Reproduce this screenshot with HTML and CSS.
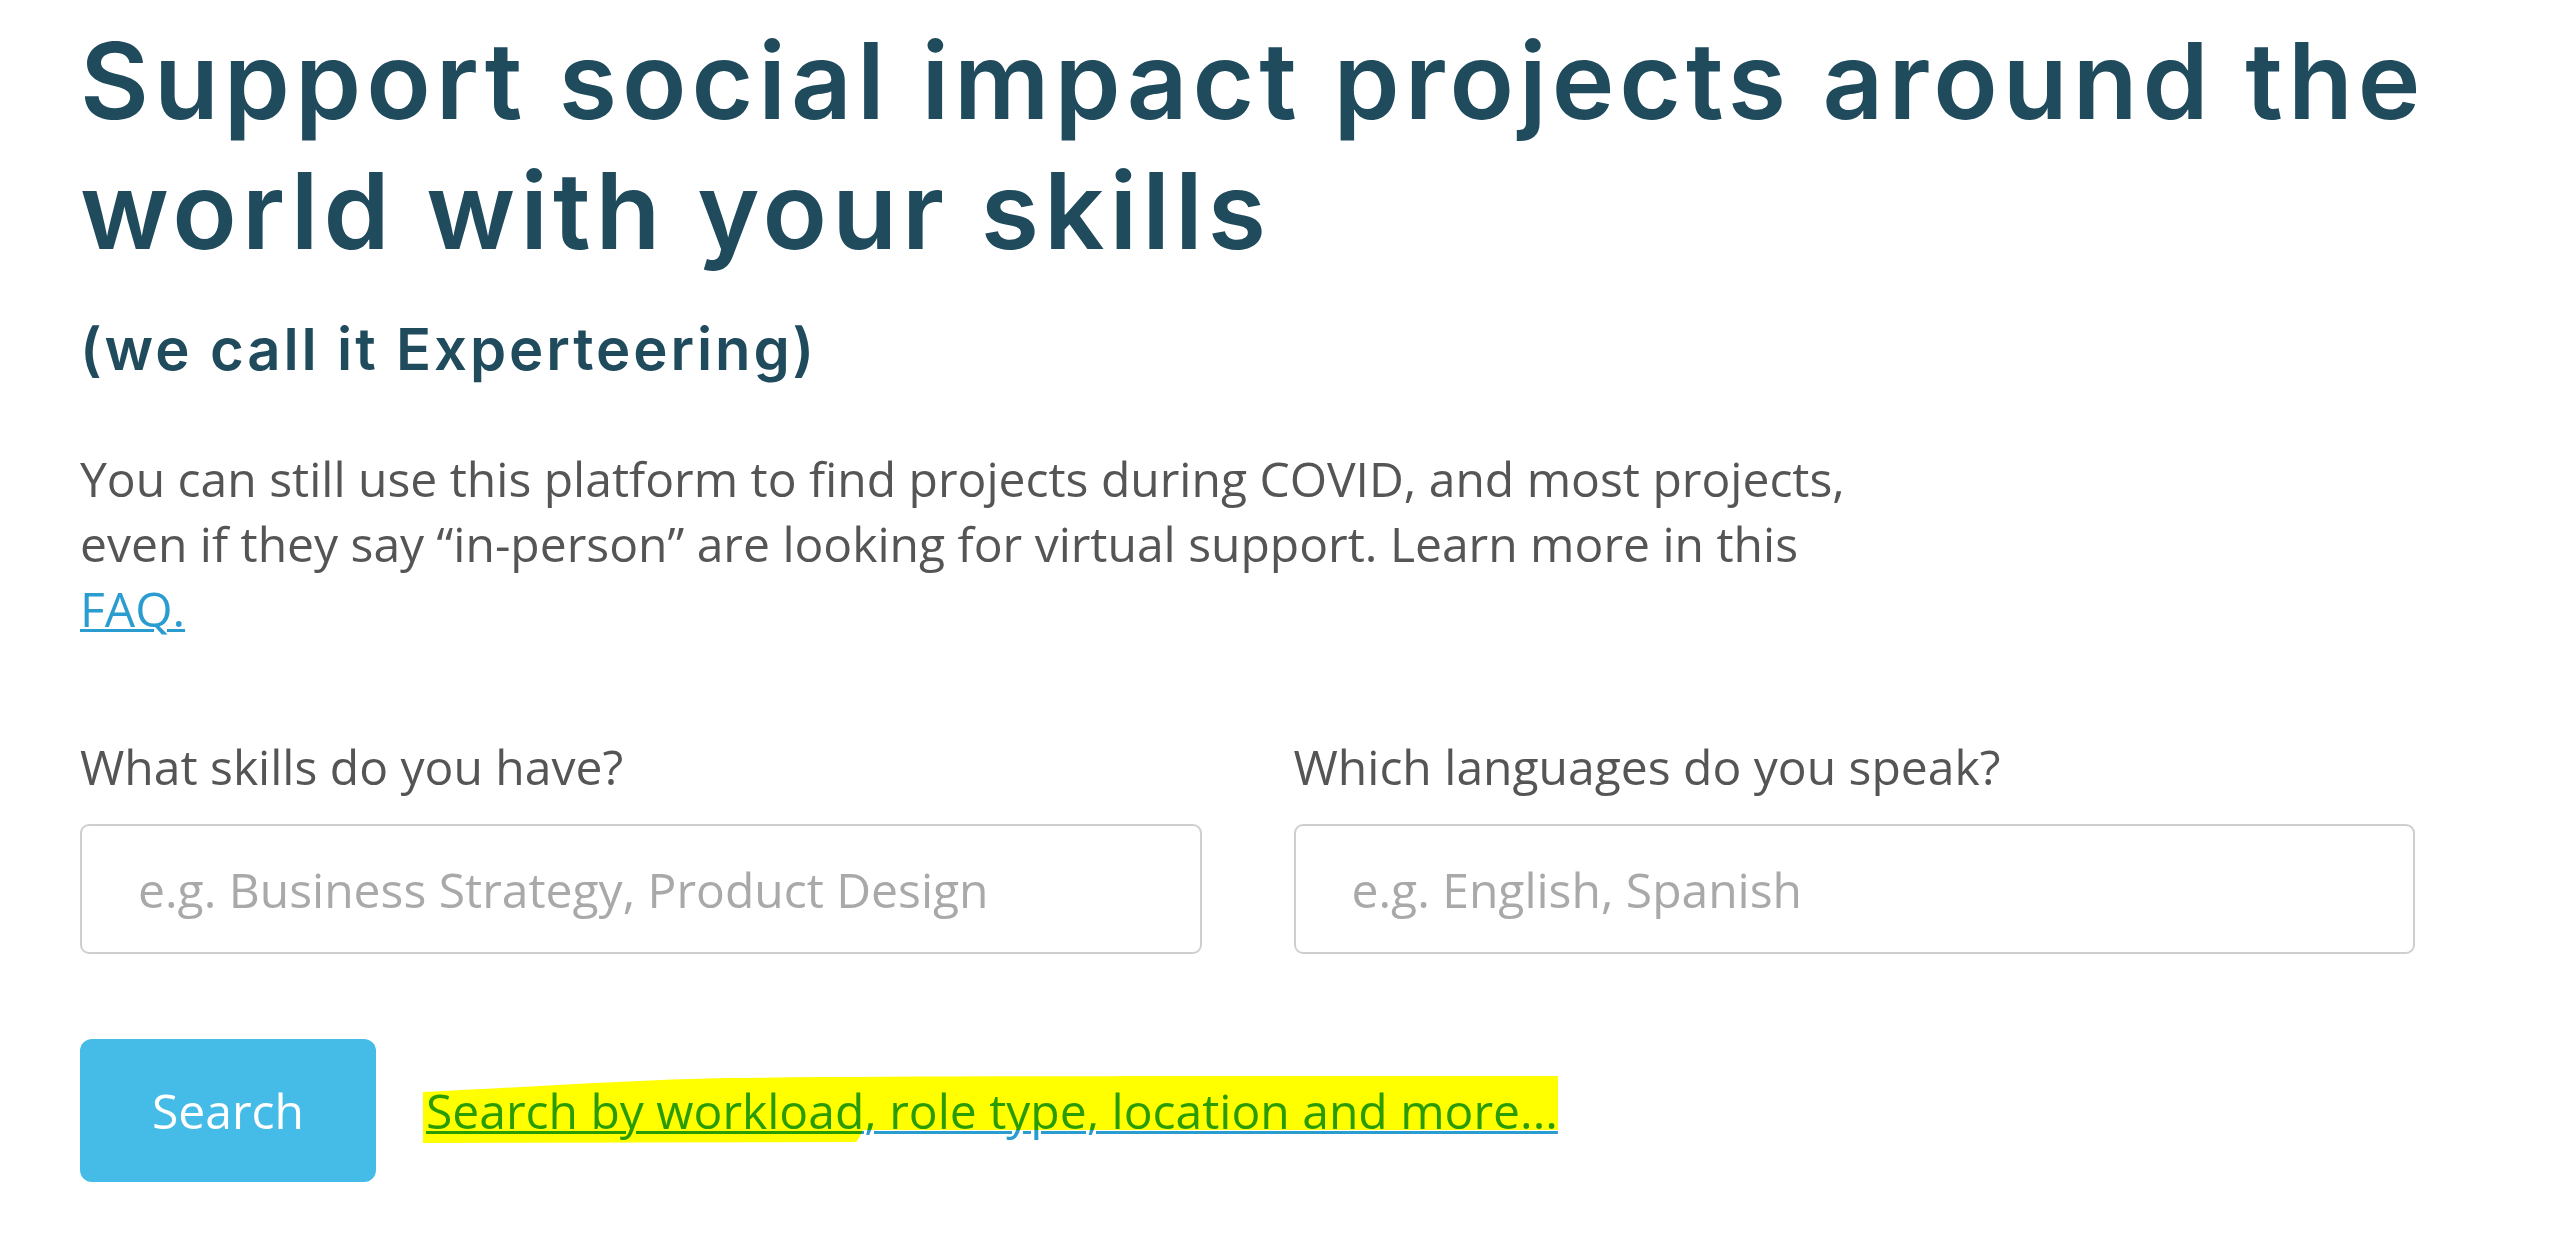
FILE: index.html
```html
<!DOCTYPE html>
<html lang="en">
<head>
<meta charset="utf-8">
<title>Experteering</title>
<link rel="stylesheet" href="styles.css">
</head>
<body>
<main class="page">
  <h1 class="title">Support social impact projects around the world with your skills</h1>
  <h2 class="subtitle">(we call it Experteering)</h2>
  <p class="intro">You can still use this platform to find projects during COVID, and most projects, even if they say “in-person” are looking for virtual support. Learn more in this <a class="faq" href="#">FAQ.</a></p>
  <form class="search-form">
    <div class="fields">
      <label class="field">
        <span class="field-label">What skills do you have?</span>
        <input class="field-input" type="text" placeholder="e.g. Business Strategy, Product Design">
      </label>
      <label class="field">
        <span class="field-label">Which languages do you speak?</span>
        <input class="field-input" type="text" placeholder="e.g. English, Spanish">
      </label>
    </div>
    <div class="actions">
      <button class="search-btn" type="button">Search</button>
      <span class="more-wrap">
        <a class="more-link" href="#">Search by workload, role type, location and more...</a>
        <svg class="marker" width="1140" height="72" viewBox="-4 -6 1140 72" aria-hidden="true">
          <path d="M -3 13 C 90 9, 200 1, 300 -1 C 500 -3, 800 -3, 850 -3 L 1132 -3 L 1132 51 L 437 51 C 434 57, 432 61, 430 63 L -3 64 Z" fill="#ffff00"/>
        </svg>
      </span>
    </div>
  </form>
</main>
</body>
</html>
```

FILE: styles.css
```css
html, body {
  margin: 0;
  padding: 0;
  background: #ffffff;
}

.page {
  padding: 16px 80px 0 80px;
  font-family: "Open Sans", "Liberation Sans", sans-serif;
  color: #555555;
}

.title {
  margin: 0;
  font-family: Inter, "Open Sans", sans-serif;
  font-weight: 600;
  font-size: 106px;
  line-height: 130px;
  color: #1f4b5d;
  letter-spacing: 5px;
  max-width: 2420px;
}

.subtitle {
  margin: 38px 0 0 0;
  font-family: Inter, "Open Sans", sans-serif;
  font-weight: 600;
  font-size: 58px;
  line-height: 70px;
  letter-spacing: 2.9px;
  color: #1f4b5d;
}

.intro {
  margin: 62px 0 0 0;
  max-width: 1790px;
  font-size: 48px;
  line-height: 65px;
  color: #555555;
}

.faq {
  color: #2a9ccf;
  text-decoration: underline;
  text-decoration-thickness: 3px;
}

.search-form {
  margin-top: 93px;
}

.fields {
  display: grid;
  grid-template-columns: 1fr 1fr;
  column-gap: 92px;
  width: 2335px;
}

.field {
  display: flex;
  flex-direction: column;
  gap: 25px;
}

.field-label {
  font-size: 48px;
  line-height: 65px;
  color: #555555;
}

.field-input {
  box-sizing: border-box;
  height: 130px;
  width: 100%;
  border: 2px solid #cfcfcf;
  border-radius: 9px;
  padding: 0 20px 0 56px;
  font-family: "Open Sans", sans-serif;
  font-size: 48px;
  color: #555555;
  background: #ffffff;
  outline: none;
}

.field-input::placeholder {
  color: #a9a9a9;
}

.actions {
  margin-top: 85px;
  display: flex;
  align-items: center;
}

.search-btn {
  box-sizing: border-box;
  width: 296px;
  height: 143px;
  border: none;
  border-radius: 12px;
  background: #45bce7;
  color: #ffffff;
  font-family: "Open Sans", sans-serif;
  font-size: 48px;
  padding: 0;
}

.more-wrap {
  position: relative;
  margin-left: 50px;
  display: inline-block;
  font-size: 48px;
  line-height: 64px;
}

.more-link {
  color: #2a9ccf;
  text-decoration: underline;
  text-decoration-thickness: 3px;
}

.marker {
  position: absolute;
  left: -4px;
  top: -6px;
  mix-blend-mode: multiply;
  pointer-events: none;
}
```
